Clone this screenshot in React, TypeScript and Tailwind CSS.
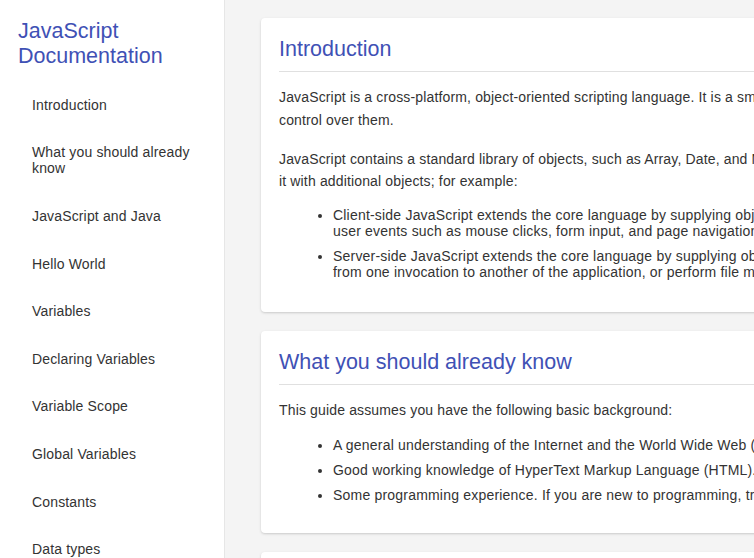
const navItems = [
  "Introduction",
  "What you should already know",
  "JavaScript and Java",
  "Hello World",
  "Variables",
  "Declaring Variables",
  "Variable Scope",
  "Global Variables",
  "Constants",
  "Data types",
  "if...else statement",
  "while statement",
];

function Card({ title, children }: { title: string; children: React.ReactNode }) {
  return (
    <section className="w-[1600px] rounded-[4px] bg-white px-[18px] pt-[19px] pb-[18px] shadow-[0_1px_3px_rgba(0,0,0,0.12),0_1px_2px_rgba(0,0,0,0.06)]">
      <h2 className="text-[21.5px] leading-[25px] text-[#3f51b5]">{title}</h2>
      <hr className="mt-[9px] mb-0 border-t border-[#e0e0e0]" />
      <div className="pt-[14px] text-[14px] text-[#333]">{children}</div>
    </section>
  );
}

export default function App() {
  return (
    <div
      className="flex h-screen w-screen overflow-hidden"
      style={{ fontFamily: '"Liberation Sans", Arial, sans-serif' }}
    >
      <nav className="w-[225px] shrink-0 border-r border-[#e6e6e6] bg-white">
        <header className="mb-[12px] px-[18px] pt-[19px] text-[21.5px] leading-[25px] text-[#3f51b5]">
          JavaScript Documentation
        </header>
        <ul>
          {navItems.map((label) => (
            <li key={label} className="py-[15.8px] pl-8 pr-4 text-[14px] leading-4 tracking-[0.15px] text-[#333]">
              {label}
            </li>
          ))}
        </ul>
      </nav>

      <main className="flex flex-1 flex-col gap-[18.5px] overflow-hidden bg-[#f4f4f4] pt-[18px] pl-[36px]">
        <Card title="Introduction">
          <p className="mb-[16.5px] whitespace-nowrap leading-[22.5px] tracking-[0.15px]">
            JavaScript is a cross-platform, object-oriented scripting language. It is a small and lightweight language. Inside a host environment (for example, a web browser), JavaScript can be connected to the objects of its environment to provide programmatic
            <br />
            control over them.
          </p>
          <p className="whitespace-nowrap leading-[22.5px] tracking-[0.15px]">
            JavaScript contains a standard library of objects, such as Array, Date, and Math, and a core set of language elements such as operators, control structures, and statements. Core JavaScript can be extended for a variety of purposes by supplementing
            <br />
            it with additional objects; for example:
          </p>
          <ul className="mt-[14px] mb-[14px] list-disc space-y-[9.5px] pl-[54px] tracking-[0.2px]">
            <li className="whitespace-nowrap leading-[16px]">
              Client-side JavaScript extends the core language by supplying objects to control a browser and its Document Object Model (DOM). For example, client-side extensions allow an application to place elements on an HTML form and respond to
              <br />
              user events such as mouse clicks, form input, and page navigation.
            </li>
            <li className="whitespace-nowrap leading-[16px]">
              Server-side JavaScript extends the core language by supplying objects relevant to running JavaScript on a server. For example, server-side extensions allow an application to communicate with a database, provide continuity of information
              <br />
              from one invocation to another of the application, or perform file manipulations on a server.
            </li>
          </ul>
        </Card>

        <Card title="What you should already know">
          <p className="whitespace-nowrap leading-[22.5px] tracking-[0.15px]">This guide assumes you have the following basic background:</p>
          <ul className="mt-[16px] mb-[12px] list-disc space-y-[9px] pl-[54px] tracking-[0.2px]">
            <li className="whitespace-nowrap leading-[16px]">
              A general understanding of the Internet and the World Wide Web (WWW).
            </li>
            <li className="whitespace-nowrap leading-[16px]">
              Good working knowledge of HyperText Markup Language (HTML).
            </li>
            <li className="whitespace-nowrap leading-[16px]">
              Some programming experience. If you are new to programming, try one of the tutorials linked on the main page about JavaScript.
            </li>
          </ul>
        </Card>

        <Card title="JavaScript and Java">
          <p className="whitespace-nowrap leading-[22.5px] tracking-[0.15px]">
            JavaScript and Java are similar in some ways but fundamentally different in some others.
          </p>
        </Card>
      </main>
    </div>
  );
}
